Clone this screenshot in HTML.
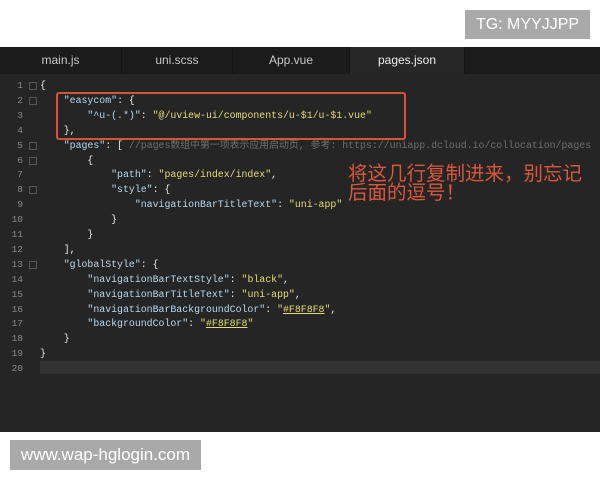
<!DOCTYPE html>
<html><head><meta charset="utf-8"><style>
body{margin:0;width:600px;height:480px;background:#fff;position:relative;overflow:hidden;font-family:"Liberation Sans",sans-serif}
.wm{position:absolute;background:#a9a9a9;color:#fff;font-size:16px;line-height:30px;text-align:center}
#ed{position:absolute;left:0;top:47px;width:600px;height:385px;background:#252525}
#tabs{position:absolute;left:0;top:0;width:600px;height:27px;background:#1b1b1b}
.tab{position:absolute;top:0;height:27px;line-height:27px;text-align:center;color:#c8c8c8;font-size:12px;border-right:1px solid #141414}
.tab.a{background:#262626;color:#eee}
.ln{position:absolute;left:0;width:23px;text-align:right;color:#8a8a8a;font:9.5px/13px "Liberation Mono",monospace}
.fd{position:absolute;left:29px;width:6px;height:6px;border:1px solid #555}
.code{position:absolute;left:0;font:9.9px/13px "Liberation Mono","Noto Sans CJK SC",monospace;color:#e8e8e8;white-space:pre;height:13px}
.k{color:#b5d9ee}.s{color:#e6db74}.c{color:#6f6f6f}.u{text-decoration:underline}
</style></head><body>
<div class="wm" style="left:465px;top:10px;width:125px;height:29px">TG: MYYJJPP</div>
<div id="ed">
<div id="tabs">
<div class="tab" style="left:0;width:121px">main.js</div>
<div class="tab" style="left:122px;width:110px">uni.scss</div>
<div class="tab" style="left:233px;width:116px">App.vue</div>
<div class="tab a" style="left:350px;width:114px">pages.json</div>
</div>
<div style="position:absolute;left:40px;top:314px;width:560px;height:13px;background:#333"></div>
<div id="lines"></div>
<div style="position:absolute;left:56px;top:45px;width:346px;height:44px;border:2px solid #d4553a;border-radius:3px"></div>
<div style="position:absolute;left:348px;top:115px;color:#d9583b;font:19.5px/19px 'Noto Sans CJK SC',sans-serif;white-space:nowrap">将这几行复制进来，别忘记<br>后面的逗号！</div>
</div>
<div class="wm" style="left:10px;top:440px;width:191px;height:30px;font-size:17px">www.wap-hglogin.com</div>
<script>
var L=[
'{',
'    <span class="k">"easycom"</span>: {',
'        <span class="k">"^u-(.*)"</span>: <span class="s">"@/uview-ui/components/u-$1/u-$1.vue"</span>',
'    },',
'    <span class="k">"pages"</span>: [ <span class="c">//pages数组中第一项表示应用启动页, 参考: https://uniapp.dcloud.io/collocation/pages</span>',
'        {',
'            <span class="k">"path"</span>: <span class="s">"pages/index/index"</span>,',
'            <span class="k">"style"</span>: {',
'                <span class="k">"navigationBarTitleText"</span>: <span class="s">"uni-app"</span>',
'            }',
'        }',
'    ],',
'    <span class="k">"globalStyle"</span>: {',
'        <span class="k">"navigationBarTextStyle"</span>: <span class="s">"black"</span>,',
'        <span class="k">"navigationBarTitleText"</span>: <span class="s">"uni-app"</span>,',
'        <span class="k">"navigationBarBackgroundColor"</span>: <span class="s">"<span class="u">#F8F8F8</span>"</span>,',
'        <span class="k">"backgroundColor"</span>: <span class="s">"<span class="u">#F8F8F8</span>"</span>',
'    }',
'}',
''];
var F=[1,2,5,6,8,13];var h='';
for(var i=0;i<20;i++){var y=32+i*14.9;
h+='<div class="ln" style="top:'+y+'px">'+(i+1)+'</div>';
if(F.indexOf(i+1)>=0)h+='<div class="fd" style="top:'+(y+3)+'px"></div>';
h+='<div class="code" style="left:40px;top:'+y+'px">'+L[i]+'</div>';}
document.getElementById('lines').innerHTML=h;
</script>
</body></html>
